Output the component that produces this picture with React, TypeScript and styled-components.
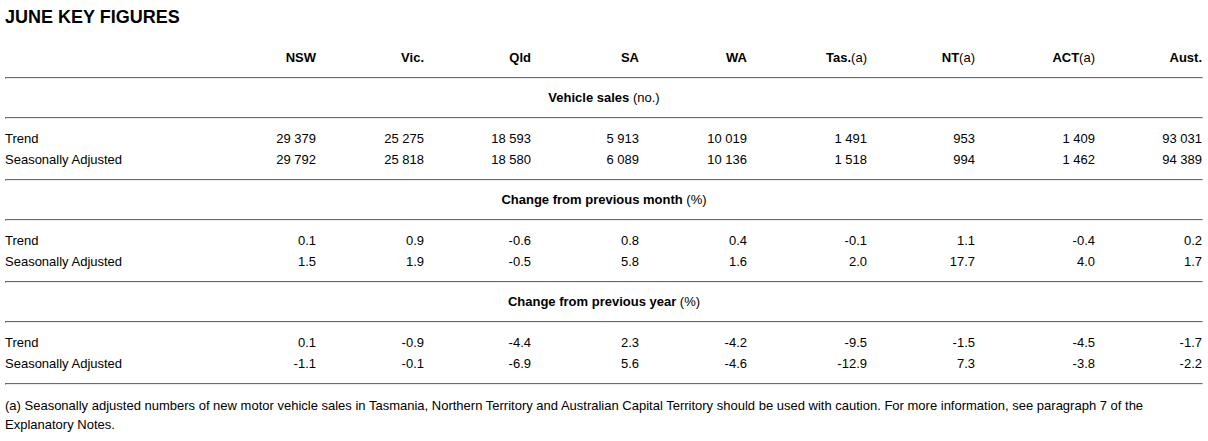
import React from "react";
import styled, { createGlobalStyle } from "styled-components";

const GlobalStyle = createGlobalStyle`
  html, body {
    margin: 0;
    padding: 0;
    background: #ffffff;
  }
  body {
    font-family: "Liberation Sans", Arial, sans-serif;
    font-size: 13px;
    color: #000000;
  }
`;

const Page = styled.div`
  width: 1198px;
  padding: 0 5px;
`;

const Title = styled.h2`
  margin: 7px 0 0;
  font-size: 18px;
  line-height: 20px;
  font-weight: bold;
`;

const COLS = "203px 108px 108px 107px 108px 108px 120px 108px 120px 107px";

const HeaderRow = styled.div`
  display: grid;
  grid-template-columns: ${COLS};
  margin-top: 21px;
  height: 20px;
  line-height: 20px;
  margin-bottom: 9px;
`;

const HeadCell = styled.div`
  text-align: right;
  font-weight: bold;
  white-space: nowrap;
`;

const Light = styled.span`
  font-weight: normal;
`;

const Rule = styled.div`
  height: 0;
  border-top: 1px solid #6b6b6b;
  border-left: 1px solid #6b6b6b;
  border-bottom: 1px solid #ebebeb;
  border-right: 1px solid #ebebeb;
`;

const SectionHead = styled.div`
  padding: 9px 0;
  line-height: 20px;
  text-align: center;
  font-weight: bold;
`;

const DataBlock = styled.div`
  padding: 9px 0;
`;

const DataRow = styled.div`
  display: grid;
  grid-template-columns: ${COLS};
  height: 21px;
  line-height: 21px;
`;

const Label = styled.div`
  white-space: nowrap;
`;

const Value = styled.div`
  text-align: right;
  white-space: nowrap;
`;

const Footnote = styled.p`
  margin: 11px 0 0;
  line-height: 19px;
`;

const headers: { main: string; sub?: string }[] = [
  { main: "NSW" },
  { main: "Vic." },
  { main: "Qld" },
  { main: "SA" },
  { main: "WA" },
  { main: "Tas.", sub: "(a)" },
  { main: "NT", sub: "(a)" },
  { main: "ACT", sub: "(a)" },
  { main: "Aust." },
];

type Section = {
  title: string;
  unit: string;
  rows: { label: string; values: string[] }[];
};

const sections: Section[] = [
  {
    title: "Vehicle sales",
    unit: "(no.)",
    rows: [
      {
        label: "Trend",
        values: ["29 379", "25 275", "18 593", "5 913", "10 019", "1 491", "953", "1 409", "93 031"],
      },
      {
        label: "Seasonally Adjusted",
        values: ["29 792", "25 818", "18 580", "6 089", "10 136", "1 518", "994", "1 462", "94 389"],
      },
    ],
  },
  {
    title: "Change from previous month",
    unit: "(%)",
    rows: [
      {
        label: "Trend",
        values: ["0.1", "0.9", "-0.6", "0.8", "0.4", "-0.1", "1.1", "-0.4", "0.2"],
      },
      {
        label: "Seasonally Adjusted",
        values: ["1.5", "1.9", "-0.5", "5.8", "1.6", "2.0", "17.7", "4.0", "1.7"],
      },
    ],
  },
  {
    title: "Change from previous year",
    unit: "(%)",
    rows: [
      {
        label: "Trend",
        values: ["0.1", "-0.9", "-4.4", "2.3", "-4.2", "-9.5", "-1.5", "-4.5", "-1.7"],
      },
      {
        label: "Seasonally Adjusted",
        values: ["-1.1", "-0.1", "-6.9", "5.6", "-4.6", "-12.9", "7.3", "-3.8", "-2.2"],
      },
    ],
  },
];

export default function App() {
  return (
    <>
      <GlobalStyle />
      <Page>
        <Title>JUNE KEY FIGURES</Title>
        <HeaderRow>
          <div />
          {headers.map((h) => (
            <HeadCell key={h.main}>
              {h.main}
              {h.sub && <Light>{h.sub}</Light>}
            </HeadCell>
          ))}
        </HeaderRow>
        {sections.map((s) => (
          <React.Fragment key={s.title}>
            <Rule />
            <SectionHead>
              {s.title} <Light>{s.unit}</Light>
            </SectionHead>
            <Rule />
            <DataBlock>
              {s.rows.map((r) => (
                <DataRow key={r.label}>
                  <Label>{r.label}</Label>
                  {r.values.map((v, i) => (
                    <Value key={i}>{v}</Value>
                  ))}
                </DataRow>
              ))}
            </DataBlock>
          </React.Fragment>
        ))}
        <Rule />
        <Footnote>
          (a) Seasonally adjusted numbers of new motor vehicle sales in Tasmania, Northern Territory and
          Australian Capital Territory should be used with caution. For more information, see paragraph 7
          of the Explanatory Notes.
        </Footnote>
      </Page>
    </>
  );
}
